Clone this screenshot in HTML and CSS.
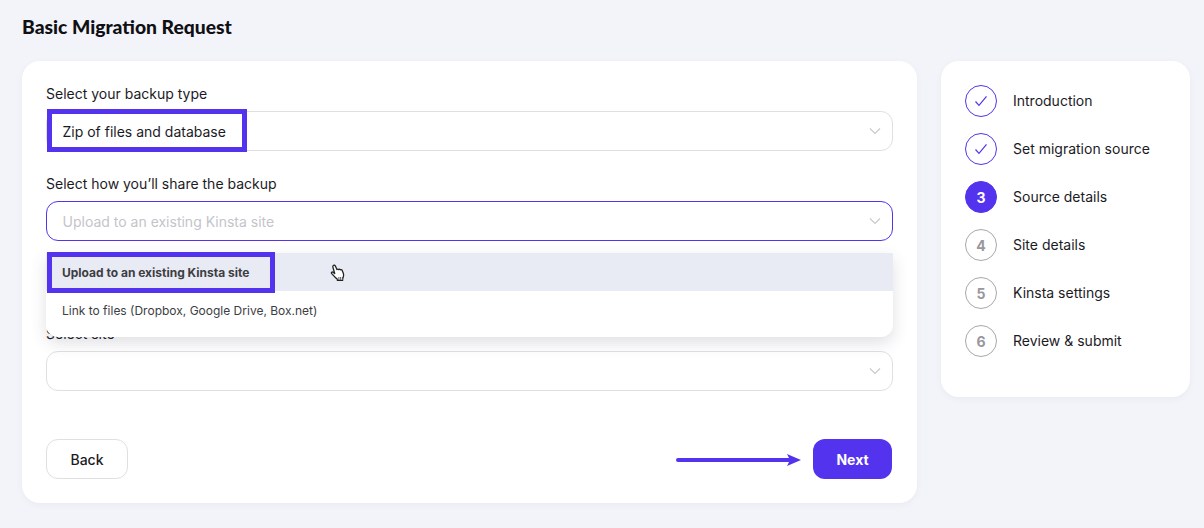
FILE: index.html
```html
<!DOCTYPE html>
<html lang="en">
<head>
    <meta charset="UTF-8">
    <meta name="viewport" content="width=device-width, initial-scale=1.0">
    <title>Basic Migration Request</title>
    <link rel="stylesheet" href="styles.css">
</head>
<body>
<h1 class="page-title">Basic Migration Request</h1>

<div class="layout">
    <!-- Form card -->
    <form class="card form-card">
        <div class="field">
            <label class="field-label">Select your backup type</label>
            <div class="select">
                <span>Zip of files and database</span>
                <svg class="chevron" viewBox="0 0 12 8"><path d="M1 1.5l5 5 5-5"/></svg>
            </div>
            <div class="highlight highlight-type"></div>
        </div>

        <div class="field field-share">
            <label class="field-label">Select how you’ll share the backup</label>
            <div class="select select-open">
                <span class="placeholder">Upload to an existing Kinsta site</span>
                <svg class="chevron" viewBox="0 0 12 8"><path d="M1 1.5l5 5 5-5"/></svg>
            </div>

            <!-- Dropdown menu -->
            <ul class="menu">
                <li class="menu-item menu-item-active">Upload to an existing Kinsta site</li>
                <li class="menu-item">Link to files (Dropbox, Google Drive, Box.net)</li>
            </ul>
            <div class="highlight highlight-option"></div>
            <svg class="hand" viewBox="0 0 16 19">
                <path d="M3.2 1.6c.8-.7 1.8-.4 2.2.5l1.5 3.500c.5-.6 1.3-.6 1.8 0 .5-.4 1.2-.4 1.7.2.6-.3 1.3-.2 1.7.4l1.3 3.200c.5 1.400.3 2.700-.2 3.900l-.6 1.600.1 1.400H7.400l-.3-1.400c-1.200-.6-2.100-1.500-2.800-2.500L1.500 9.400c-.5-.8.500-1.900 1.500-1.200L4.700 9.500 2.900 3.300c-.2-.7-.1-1.300.3-1.700z" fill="#fff" stroke="#222" stroke-width="1.300" stroke-linejoin="round"/>
                <path d="M8.900 13v3M10.700 13v3M12.500 13v3" stroke="#555" stroke-width="1"/>
            </svg>
        </div>

        <div class="field">
            <label class="field-label">Select site</label>
            <div class="select">
                <span></span>
                <svg class="chevron" viewBox="0 0 12 8"><path d="M1 1.5l5 5 5-5"/></svg>
            </div>
        </div>

        <div class="form-actions">
            <button type="button" class="btn btn-back">Back</button>
            <div class="next-group">
                <svg class="next-arrow" viewBox="0 0 125 14">
                    <path d="M2 7h112" stroke="#5333ed" stroke-width="4" stroke-linecap="round"/>
                    <path d="M111 1l14 6-14 6 3-6z" fill="#5333ed"/>
                </svg>
                <button type="button" class="btn btn-next">Next</button>
            </div>
        </div>
    </form>

    <!-- Steps -->
    <aside class="card steps-card">
        <div class="step">
            <span class="step-circle step-done"><svg viewBox="0 0 14 12"><path d="M1.500 6.500l3.500 3.800 7.500-9"/></svg></span>
            <span class="step-name">Introduction</span>
        </div>
        <div class="step">
            <span class="step-circle step-done"><svg viewBox="0 0 14 12"><path d="M1.500 6.500l3.500 3.800 7.500-9"/></svg></span>
            <span class="step-name">Set migration source</span>
        </div>
        <div class="step">
            <span class="step-circle step-current">3</span>
            <span class="step-name">Source details</span>
        </div>
        <div class="step">
            <span class="step-circle">4</span>
            <span class="step-name">Site details</span>
        </div>
        <div class="step">
            <span class="step-circle">5</span>
            <span class="step-name">Kinsta settings</span>
        </div>
        <div class="step">
            <span class="step-circle">6</span>
            <span class="step-name">Review &amp; submit</span>
        </div>
    </aside>
</div>
</body>
</html>
```

FILE: styles.css
```css
body {
    margin: 0;
    padding: 0 14px 0 22px;
    height: 528px;
    box-sizing: border-box;
    overflow: hidden;
    font-family: Inter, "Liberation Sans", sans-serif;
    font-size: 14px;
    color: #1b1b1f;
    background-color: #f3f4f9;
}

.page-title {
    margin: 0;
    padding-top: 15px;
    height: 61px;
    box-sizing: border-box;
    font-family: Lato, "Liberation Sans", sans-serif;
    font-size: 19.3px;
    line-height: 24px;
    font-weight: 900;
    color: #0f0f14;
}

.layout {
    display: flex;
    align-items: flex-start;
    gap: 24px;
}

.card {
    background-color: #fff;
    border-radius: 18px;
    box-shadow: 0 2px 6px rgba(110, 110, 160, 0.06);
}

/* Formulario */
.form-card {
    width: 895px;
    height: 442px;
    box-sizing: border-box;
    padding: 24px;
    display: flex;
    flex-direction: column;
}

.field {
    position: relative;
    margin-bottom: 24px;
}

.field-share {
    margin-bottom: 84px;
}

.field-label {
    display: block;
    height: 26px;
    line-height: 18px;
    font-size: 14px;
    color: #1b1b1f;
}

.select {
    height: 40px;
    box-sizing: border-box;
    padding: 0 11px 0 15.5px;
    display: flex;
    align-items: center;
    justify-content: space-between;
    border: 1px solid #dfdfe4;
    border-radius: 12px;
    background-color: #fff;
}

.select-open {
    border-color: #5333ed;
}

.placeholder {
    color: #c4c4cb;
}

.chevron {
    width: 12px;
    height: 8px;
    fill: none;
    stroke: #c9c9cf;
    stroke-width: 1.2;
}

/* Menu aberto */
.menu {
    position: absolute;
    z-index: 2;
    top: 78px;
    left: 0;
    right: 0;
    margin: 0;
    padding: 0 0 8px;
    list-style: none;
    background-color: #fff;
    border-radius: 0 0 12px 12px;
    box-shadow: 0 6px 16px rgba(60, 60, 90, 0.16);
    font-size: 12px;
}

.menu-item {
    height: 38px;
    box-sizing: border-box;
    padding: 1px 0 0 16px;
    line-height: 37px;
    color: #3d3d42;
}

.menu-item-active {
    font-weight: 700;
    background-color: #e8ebf4;
}

/* Destaques azuis da captura */
.highlight {
    position: absolute;
    z-index: 3;
    box-sizing: border-box;
    border: 5px solid #5333ed;
}

.highlight-type {
    top: 24px;
    left: 1px;
    width: 200px;
    height: 43px;
}

.highlight-option {
    top: 77px;
    left: 1px;
    width: 228px;
    height: 41px;
}

.hand {
    position: absolute;
    z-index: 4;
    top: 89px;
    left: 284px;
    width: 16px;
    height: 19px;
}

/* Botoes */
.form-actions {
    margin-top: 24px;
    padding-right: 1px;
    display: flex;
    align-items: center;
    justify-content: space-between;
}

.next-group {
    display: flex;
    align-items: center;
    gap: 12px;
}

.next-arrow {
    width: 125px;
    height: 14px;
    margin-top: 2px;
}

.btn {
    height: 40px;
    box-sizing: border-box;
    border-radius: 12px;
    font-family: inherit;
    font-size: 14px;
    cursor: pointer;
}

.btn-back {
    width: 82px;
    border: 1px solid #dfdfe4;
    background-color: #fff;
    color: #1b1b1f;
    font-weight: 500;
}

.btn-next {
    width: 79px;
    border: none;
    background-color: #5333ed;
    color: #fff;
    font-weight: 700;
}

/* Passos */
.steps-card {
    width: 249px;
    height: 336px;
    box-sizing: border-box;
    padding: 24px;
    display: flex;
    flex-direction: column;
    gap: 16px;
}

.step {
    display: flex;
    align-items: center;
    gap: 16px;
    height: 32px;
    color: #1b1b1f;
}

.step-name {
    padding-bottom: 2px;
}

.step-circle {
    width: 32px;
    height: 32px;
    box-sizing: border-box;
    display: flex;
    align-items: center;
    justify-content: center;
    border: 1px solid #a8a8ad;
    border-radius: 50%;
    font-weight: 700;
    color: #97979d;
}

.step-done {
    border-color: #5333ed;
}

.step-done svg {
    width: 14px;
    height: 12px;
    fill: none;
    stroke: #5333ed;
    stroke-width: 1.2;
}

.step-current {
    border-color: #5333ed;
    background-color: #5333ed;
    color: #fff;
}
```
